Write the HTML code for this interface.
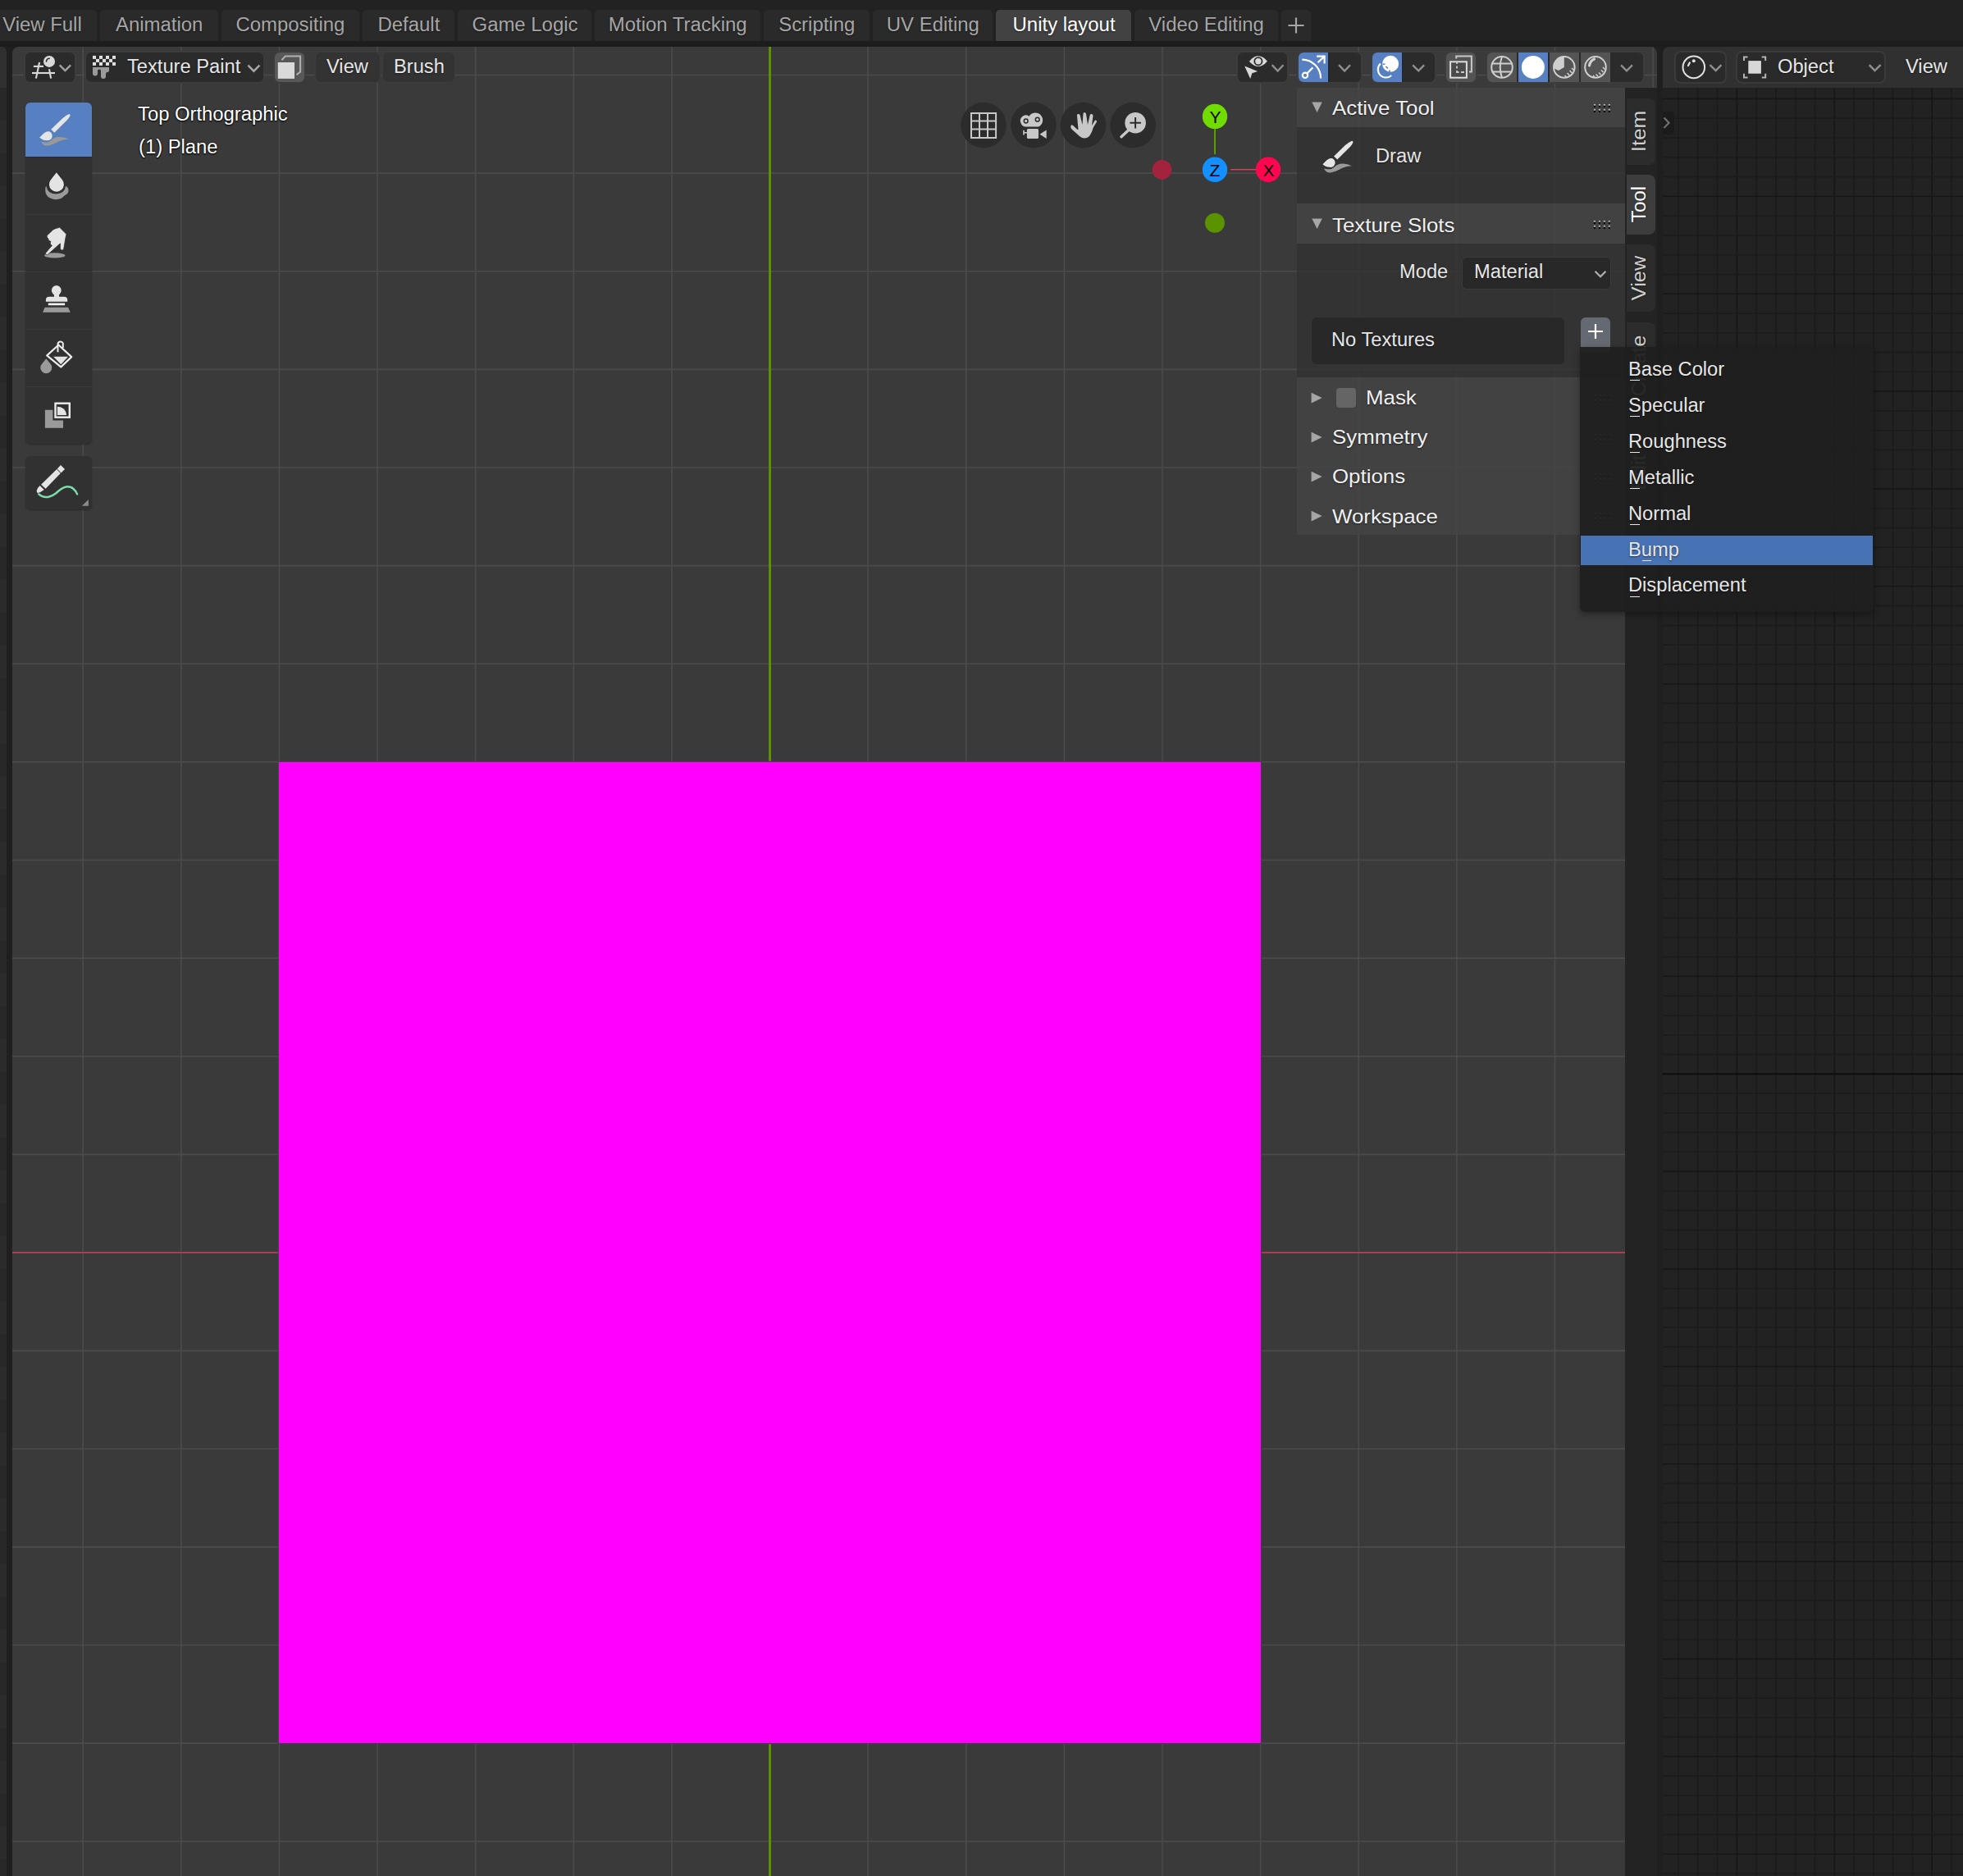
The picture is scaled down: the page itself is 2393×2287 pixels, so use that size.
<!DOCTYPE html>
<html><head><meta charset="utf-8"><title>Blender</title>
<style>
*{margin:0;padding:0;box-sizing:border-box}
html,body{width:2393px;height:2287px;overflow:hidden;background:#1f1f1f}
body{position:relative;font-family:"Liberation Sans",sans-serif}
.a{position:absolute}
.t{position:absolute;white-space:nowrap;transform-origin:0 0}
svg{position:absolute;overflow:visible}
</style></head><body>
<div class="a" style="left:0.00px;top:0.00px;width:2393.00px;height:50.00px;background:#222222;"></div><div class="a" style="left:0.00px;top:50.00px;width:2393.00px;height:7.00px;background:#1d1d1d;"></div><div class="a" style="left:-16.00px;top:12.00px;width:134.00px;height:38.00px;background:#2a2a2a;border-radius:5px 5px 0 0;"></div><div class="a" style="left:122.30px;top:12.00px;width:143.60px;height:38.00px;background:#2a2a2a;border-radius:5px 5px 0 0;"></div><div class="a" style="left:270.00px;top:12.00px;width:167.70px;height:38.00px;background:#2a2a2a;border-radius:5px 5px 0 0;"></div><div class="a" style="left:442.20px;top:12.00px;width:111.60px;height:38.00px;background:#2a2a2a;border-radius:5px 5px 0 0;"></div><div class="a" style="left:558.30px;top:12.00px;width:162.60px;height:38.00px;background:#2a2a2a;border-radius:5px 5px 0 0;"></div><div class="a" style="left:725.40px;top:12.00px;width:201.30px;height:38.00px;background:#2a2a2a;border-radius:5px 5px 0 0;"></div><div class="a" style="left:931.40px;top:12.00px;width:128.40px;height:38.00px;background:#2a2a2a;border-radius:5px 5px 0 0;"></div><div class="a" style="left:1064.30px;top:12.00px;width:145.50px;height:38.00px;background:#2a2a2a;border-radius:5px 5px 0 0;"></div><div class="a" style="left:1214.30px;top:12.00px;width:164.60px;height:38.00px;background:#424242;border-radius:5px 5px 0 0;"></div><div class="a" style="left:1383.40px;top:12.00px;width:174.60px;height:38.00px;background:#2a2a2a;border-radius:5px 5px 0 0;"></div><div class="a" style="left:1562.30px;top:12.00px;width:35.50px;height:38.00px;background:#2a2a2a;border-radius:5px 5px 0 0;"></div><div class="a" style="left:0;top:57px;width:8px;height:2230px;border-top-right-radius:6px;overflow:hidden;background:#282828"><div class="a" style="left:0.00px;top:0.00px;width:8.00px;height:50.00px;background:#303030;"></div><div class="a" style="left:0.00px;top:90.00px;width:8.00px;height:40.00px;background:#2b2b2b;"></div><div class="a" style="left:0.00px;top:170.00px;width:8.00px;height:40.00px;background:#2b2b2b;"></div><div class="a" style="left:0.00px;top:250.00px;width:8.00px;height:40.00px;background:#2b2b2b;"></div><div class="a" style="left:0.00px;top:330.00px;width:8.00px;height:40.00px;background:#2b2b2b;"></div><div class="a" style="left:0.00px;top:410.00px;width:8.00px;height:40.00px;background:#2b2b2b;"></div><div class="a" style="left:0.00px;top:490.00px;width:8.00px;height:40.00px;background:#2b2b2b;"></div><div class="a" style="left:0.00px;top:570.00px;width:8.00px;height:40.00px;background:#2b2b2b;"></div><div class="a" style="left:0.00px;top:650.00px;width:8.00px;height:40.00px;background:#2b2b2b;"></div><div class="a" style="left:0.00px;top:730.00px;width:8.00px;height:40.00px;background:#2b2b2b;"></div><div class="a" style="left:0.00px;top:810.00px;width:8.00px;height:40.00px;background:#2b2b2b;"></div><div class="a" style="left:0.00px;top:890.00px;width:8.00px;height:40.00px;background:#2b2b2b;"></div><div class="a" style="left:0.00px;top:970.00px;width:8.00px;height:40.00px;background:#2b2b2b;"></div><div class="a" style="left:0.00px;top:1050.00px;width:8.00px;height:40.00px;background:#2b2b2b;"></div><div class="a" style="left:0.00px;top:1130.00px;width:8.00px;height:40.00px;background:#2b2b2b;"></div><div class="a" style="left:0.00px;top:1210.00px;width:8.00px;height:40.00px;background:#2b2b2b;"></div><div class="a" style="left:0.00px;top:1290.00px;width:8.00px;height:40.00px;background:#2b2b2b;"></div><div class="a" style="left:0.00px;top:1370.00px;width:8.00px;height:40.00px;background:#2b2b2b;"></div><div class="a" style="left:0.00px;top:1450.00px;width:8.00px;height:40.00px;background:#2b2b2b;"></div><div class="a" style="left:0.00px;top:1530.00px;width:8.00px;height:40.00px;background:#2b2b2b;"></div><div class="a" style="left:0.00px;top:1610.00px;width:8.00px;height:40.00px;background:#2b2b2b;"></div><div class="a" style="left:0.00px;top:1690.00px;width:8.00px;height:40.00px;background:#2b2b2b;"></div><div class="a" style="left:0.00px;top:1770.00px;width:8.00px;height:40.00px;background:#2b2b2b;"></div><div class="a" style="left:0.00px;top:1850.00px;width:8.00px;height:40.00px;background:#2b2b2b;"></div><div class="a" style="left:0.00px;top:1930.00px;width:8.00px;height:40.00px;background:#2b2b2b;"></div><div class="a" style="left:0.00px;top:2010.00px;width:8.00px;height:40.00px;background:#2b2b2b;"></div><div class="a" style="left:0.00px;top:2090.00px;width:8.00px;height:40.00px;background:#2b2b2b;"></div><div class="a" style="left:0.00px;top:2170.00px;width:8.00px;height:40.00px;background:#2b2b2b;"></div><div class="a" style="left:0.00px;top:2250.00px;width:8.00px;height:40.00px;background:#2b2b2b;"></div></div><div class="a" style="left:15px;top:57px;width:2005px;height:2230px;background:#3a3a3a;border-radius:8px 8px 0 0;overflow:hidden"><svg width="2005" height="2230" style="left:0;top:0"><line x1="86.20" y1="0" x2="86.20" y2="2287" stroke="#4b4b4b" stroke-width="1.6"/><line x1="205.82" y1="0" x2="205.82" y2="2287" stroke="#4b4b4b" stroke-width="1.6"/><line x1="325.44" y1="0" x2="325.44" y2="2287" stroke="#4b4b4b" stroke-width="1.6"/><line x1="445.06" y1="0" x2="445.06" y2="2287" stroke="#4b4b4b" stroke-width="1.6"/><line x1="564.68" y1="0" x2="564.68" y2="2287" stroke="#4b4b4b" stroke-width="1.6"/><line x1="684.30" y1="0" x2="684.30" y2="2287" stroke="#4b4b4b" stroke-width="1.6"/><line x1="803.92" y1="0" x2="803.92" y2="2287" stroke="#4b4b4b" stroke-width="1.6"/><line x1="923.54" y1="0" x2="923.54" y2="2287" stroke="#4b4b4b" stroke-width="1.6"/><line x1="1043.16" y1="0" x2="1043.16" y2="2287" stroke="#4b4b4b" stroke-width="1.6"/><line x1="1162.78" y1="0" x2="1162.78" y2="2287" stroke="#4b4b4b" stroke-width="1.6"/><line x1="1282.40" y1="0" x2="1282.40" y2="2287" stroke="#4b4b4b" stroke-width="1.6"/><line x1="1402.02" y1="0" x2="1402.02" y2="2287" stroke="#4b4b4b" stroke-width="1.6"/><line x1="1521.64" y1="0" x2="1521.64" y2="2287" stroke="#4b4b4b" stroke-width="1.6"/><line x1="1641.26" y1="0" x2="1641.26" y2="2287" stroke="#4b4b4b" stroke-width="1.6"/><line x1="1760.88" y1="0" x2="1760.88" y2="2287" stroke="#4b4b4b" stroke-width="1.6"/><line x1="1880.50" y1="0" x2="1880.50" y2="2287" stroke="#4b4b4b" stroke-width="1.6"/><line x1="2000.12" y1="0" x2="2000.12" y2="2287" stroke="#4b4b4b" stroke-width="1.6"/><line x1="0" y1="34.54" x2="2020" y2="34.54" stroke="#4b4b4b" stroke-width="1.6"/><line x1="0" y1="154.16" x2="2020" y2="154.16" stroke="#4b4b4b" stroke-width="1.6"/><line x1="0" y1="273.78" x2="2020" y2="273.78" stroke="#4b4b4b" stroke-width="1.6"/><line x1="0" y1="393.40" x2="2020" y2="393.40" stroke="#4b4b4b" stroke-width="1.6"/><line x1="0" y1="513.02" x2="2020" y2="513.02" stroke="#4b4b4b" stroke-width="1.6"/><line x1="0" y1="632.64" x2="2020" y2="632.64" stroke="#4b4b4b" stroke-width="1.6"/><line x1="0" y1="752.26" x2="2020" y2="752.26" stroke="#4b4b4b" stroke-width="1.6"/><line x1="0" y1="871.88" x2="2020" y2="871.88" stroke="#4b4b4b" stroke-width="1.6"/><line x1="0" y1="991.50" x2="2020" y2="991.50" stroke="#4b4b4b" stroke-width="1.6"/><line x1="0" y1="1111.12" x2="2020" y2="1111.12" stroke="#4b4b4b" stroke-width="1.6"/><line x1="0" y1="1230.74" x2="2020" y2="1230.74" stroke="#4b4b4b" stroke-width="1.6"/><line x1="0" y1="1350.36" x2="2020" y2="1350.36" stroke="#4b4b4b" stroke-width="1.6"/><line x1="0" y1="1469.98" x2="2020" y2="1469.98" stroke="#4b4b4b" stroke-width="1.6"/><line x1="0" y1="1589.60" x2="2020" y2="1589.60" stroke="#4b4b4b" stroke-width="1.6"/><line x1="0" y1="1709.22" x2="2020" y2="1709.22" stroke="#4b4b4b" stroke-width="1.6"/><line x1="0" y1="1828.84" x2="2020" y2="1828.84" stroke="#4b4b4b" stroke-width="1.6"/><line x1="0" y1="1948.46" x2="2020" y2="1948.46" stroke="#4b4b4b" stroke-width="1.6"/><line x1="0" y1="2068.08" x2="2020" y2="2068.08" stroke="#4b4b4b" stroke-width="1.6"/><line x1="0" y1="2187.70" x2="2020" y2="2187.70" stroke="#4b4b4b" stroke-width="1.6"/><line x1="923.54" y1="0" x2="923.54" y2="2287" stroke="#609600" stroke-width="2.8"/><line x1="0" y1="1469.98" x2="2020" y2="1469.98" stroke="#b93755" stroke-width="2.2"/><rect x="324.20" y="871.36" width="1198.45" height="1197.24" fill="none" stroke="#2f4a32" stroke-width="1.2"/><rect x="324.80" y="871.96" width="1197.25" height="1196.04" fill="#ff00ff"/></svg></div><div class="a" style="left:2027.00px;top:57.00px;width:366.00px;height:2230.00px;background:#222222;border-top-left-radius:8px;overflow:hidden;"></div><svg width="366" height="2180" style="left:2027px;top:107px"><line x1="18.93" y1="0" x2="18.93" y2="2287" stroke="#1b1b1b" stroke-width="1.5"/><line x1="42.72" y1="0" x2="42.72" y2="2287" stroke="#1b1b1b" stroke-width="1.5"/><line x1="66.51" y1="0" x2="66.51" y2="2287" stroke="#1b1b1b" stroke-width="1.5"/><line x1="90.30" y1="0" x2="90.30" y2="2287" stroke="#161616" stroke-width="1.5"/><line x1="114.09" y1="0" x2="114.09" y2="2287" stroke="#1b1b1b" stroke-width="1.5"/><line x1="137.88" y1="0" x2="137.88" y2="2287" stroke="#1b1b1b" stroke-width="1.5"/><line x1="161.67" y1="0" x2="161.67" y2="2287" stroke="#1b1b1b" stroke-width="1.5"/><line x1="185.46" y1="0" x2="185.46" y2="2287" stroke="#1b1b1b" stroke-width="1.5"/><line x1="209.25" y1="0" x2="209.25" y2="2287" stroke="#161616" stroke-width="1.5"/><line x1="233.04" y1="0" x2="233.04" y2="2287" stroke="#1b1b1b" stroke-width="1.5"/><line x1="256.83" y1="0" x2="256.83" y2="2287" stroke="#1b1b1b" stroke-width="1.5"/><line x1="280.62" y1="0" x2="280.62" y2="2287" stroke="#1b1b1b" stroke-width="1.5"/><line x1="304.41" y1="0" x2="304.41" y2="2287" stroke="#1b1b1b" stroke-width="1.5"/><line x1="328.20" y1="0" x2="328.20" y2="2287" stroke="#161616" stroke-width="1.5"/><line x1="351.99" y1="0" x2="351.99" y2="2287" stroke="#1b1b1b" stroke-width="1.5"/><line x1="0" y1="13.50" x2="2393" y2="13.50" stroke="#161616" stroke-width="1.5"/><line x1="0" y1="37.27" x2="2393" y2="37.27" stroke="#1b1b1b" stroke-width="1.5"/><line x1="0" y1="61.05" x2="2393" y2="61.05" stroke="#1b1b1b" stroke-width="1.5"/><line x1="0" y1="84.82" x2="2393" y2="84.82" stroke="#1b1b1b" stroke-width="1.5"/><line x1="0" y1="108.60" x2="2393" y2="108.60" stroke="#1b1b1b" stroke-width="1.5"/><line x1="0" y1="132.37" x2="2393" y2="132.37" stroke="#161616" stroke-width="1.5"/><line x1="0" y1="156.14" x2="2393" y2="156.14" stroke="#1b1b1b" stroke-width="1.5"/><line x1="0" y1="179.92" x2="2393" y2="179.92" stroke="#1b1b1b" stroke-width="1.5"/><line x1="0" y1="203.69" x2="2393" y2="203.69" stroke="#1b1b1b" stroke-width="1.5"/><line x1="0" y1="227.47" x2="2393" y2="227.47" stroke="#1b1b1b" stroke-width="1.5"/><line x1="0" y1="251.24" x2="2393" y2="251.24" stroke="#161616" stroke-width="1.5"/><line x1="0" y1="275.01" x2="2393" y2="275.01" stroke="#1b1b1b" stroke-width="1.5"/><line x1="0" y1="298.79" x2="2393" y2="298.79" stroke="#1b1b1b" stroke-width="1.5"/><line x1="0" y1="322.56" x2="2393" y2="322.56" stroke="#1b1b1b" stroke-width="1.5"/><line x1="0" y1="346.34" x2="2393" y2="346.34" stroke="#1b1b1b" stroke-width="1.5"/><line x1="0" y1="370.11" x2="2393" y2="370.11" stroke="#161616" stroke-width="1.5"/><line x1="0" y1="393.88" x2="2393" y2="393.88" stroke="#1b1b1b" stroke-width="1.5"/><line x1="0" y1="417.66" x2="2393" y2="417.66" stroke="#1b1b1b" stroke-width="1.5"/><line x1="0" y1="441.43" x2="2393" y2="441.43" stroke="#1b1b1b" stroke-width="1.5"/><line x1="0" y1="465.21" x2="2393" y2="465.21" stroke="#1b1b1b" stroke-width="1.5"/><line x1="0" y1="488.98" x2="2393" y2="488.98" stroke="#161616" stroke-width="1.5"/><line x1="0" y1="512.75" x2="2393" y2="512.75" stroke="#1b1b1b" stroke-width="1.5"/><line x1="0" y1="536.53" x2="2393" y2="536.53" stroke="#1b1b1b" stroke-width="1.5"/><line x1="0" y1="560.30" x2="2393" y2="560.30" stroke="#1b1b1b" stroke-width="1.5"/><line x1="0" y1="584.08" x2="2393" y2="584.08" stroke="#1b1b1b" stroke-width="1.5"/><line x1="0" y1="607.85" x2="2393" y2="607.85" stroke="#161616" stroke-width="1.5"/><line x1="0" y1="631.62" x2="2393" y2="631.62" stroke="#1b1b1b" stroke-width="1.5"/><line x1="0" y1="655.40" x2="2393" y2="655.40" stroke="#1b1b1b" stroke-width="1.5"/><line x1="0" y1="679.17" x2="2393" y2="679.17" stroke="#1b1b1b" stroke-width="1.5"/><line x1="0" y1="702.95" x2="2393" y2="702.95" stroke="#1b1b1b" stroke-width="1.5"/><line x1="0" y1="726.72" x2="2393" y2="726.72" stroke="#161616" stroke-width="1.5"/><line x1="0" y1="750.49" x2="2393" y2="750.49" stroke="#1b1b1b" stroke-width="1.5"/><line x1="0" y1="774.27" x2="2393" y2="774.27" stroke="#1b1b1b" stroke-width="1.5"/><line x1="0" y1="798.04" x2="2393" y2="798.04" stroke="#1b1b1b" stroke-width="1.5"/><line x1="0" y1="821.82" x2="2393" y2="821.82" stroke="#1b1b1b" stroke-width="1.5"/><line x1="0" y1="845.59" x2="2393" y2="845.59" stroke="#161616" stroke-width="1.5"/><line x1="0" y1="869.36" x2="2393" y2="869.36" stroke="#1b1b1b" stroke-width="1.5"/><line x1="0" y1="893.14" x2="2393" y2="893.14" stroke="#1b1b1b" stroke-width="1.5"/><line x1="0" y1="916.91" x2="2393" y2="916.91" stroke="#1b1b1b" stroke-width="1.5"/><line x1="0" y1="940.69" x2="2393" y2="940.69" stroke="#1b1b1b" stroke-width="1.5"/><line x1="0" y1="964.46" x2="2393" y2="964.46" stroke="#161616" stroke-width="1.5"/><line x1="0" y1="988.23" x2="2393" y2="988.23" stroke="#1b1b1b" stroke-width="1.5"/><line x1="0" y1="1012.01" x2="2393" y2="1012.01" stroke="#1b1b1b" stroke-width="1.5"/><line x1="0" y1="1035.78" x2="2393" y2="1035.78" stroke="#1b1b1b" stroke-width="1.5"/><line x1="0" y1="1059.56" x2="2393" y2="1059.56" stroke="#1b1b1b" stroke-width="1.5"/><line x1="0" y1="1083.33" x2="2393" y2="1083.33" stroke="#161616" stroke-width="1.5"/><line x1="0" y1="1107.10" x2="2393" y2="1107.10" stroke="#1b1b1b" stroke-width="1.5"/><line x1="0" y1="1130.88" x2="2393" y2="1130.88" stroke="#1b1b1b" stroke-width="1.5"/><line x1="0" y1="1154.65" x2="2393" y2="1154.65" stroke="#1b1b1b" stroke-width="1.5"/><line x1="0" y1="1178.43" x2="2393" y2="1178.43" stroke="#1b1b1b" stroke-width="1.5"/><line x1="0" y1="1202.20" x2="2393" y2="1202.20" stroke="#0e0e0e" stroke-width="2"/><line x1="0" y1="1225.97" x2="2393" y2="1225.97" stroke="#1b1b1b" stroke-width="1.5"/><line x1="0" y1="1249.75" x2="2393" y2="1249.75" stroke="#1b1b1b" stroke-width="1.5"/><line x1="0" y1="1273.52" x2="2393" y2="1273.52" stroke="#1b1b1b" stroke-width="1.5"/><line x1="0" y1="1297.30" x2="2393" y2="1297.30" stroke="#1b1b1b" stroke-width="1.5"/><line x1="0" y1="1321.07" x2="2393" y2="1321.07" stroke="#161616" stroke-width="1.5"/><line x1="0" y1="1344.84" x2="2393" y2="1344.84" stroke="#1b1b1b" stroke-width="1.5"/><line x1="0" y1="1368.62" x2="2393" y2="1368.62" stroke="#1b1b1b" stroke-width="1.5"/><line x1="0" y1="1392.39" x2="2393" y2="1392.39" stroke="#1b1b1b" stroke-width="1.5"/><line x1="0" y1="1416.17" x2="2393" y2="1416.17" stroke="#1b1b1b" stroke-width="1.5"/><line x1="0" y1="1439.94" x2="2393" y2="1439.94" stroke="#161616" stroke-width="1.5"/><line x1="0" y1="1463.71" x2="2393" y2="1463.71" stroke="#1b1b1b" stroke-width="1.5"/><line x1="0" y1="1487.49" x2="2393" y2="1487.49" stroke="#1b1b1b" stroke-width="1.5"/><line x1="0" y1="1511.26" x2="2393" y2="1511.26" stroke="#1b1b1b" stroke-width="1.5"/><line x1="0" y1="1535.04" x2="2393" y2="1535.04" stroke="#1b1b1b" stroke-width="1.5"/><line x1="0" y1="1558.81" x2="2393" y2="1558.81" stroke="#161616" stroke-width="1.5"/><line x1="0" y1="1582.58" x2="2393" y2="1582.58" stroke="#1b1b1b" stroke-width="1.5"/><line x1="0" y1="1606.36" x2="2393" y2="1606.36" stroke="#1b1b1b" stroke-width="1.5"/><line x1="0" y1="1630.13" x2="2393" y2="1630.13" stroke="#1b1b1b" stroke-width="1.5"/><line x1="0" y1="1653.91" x2="2393" y2="1653.91" stroke="#1b1b1b" stroke-width="1.5"/><line x1="0" y1="1677.68" x2="2393" y2="1677.68" stroke="#161616" stroke-width="1.5"/><line x1="0" y1="1701.45" x2="2393" y2="1701.45" stroke="#1b1b1b" stroke-width="1.5"/><line x1="0" y1="1725.23" x2="2393" y2="1725.23" stroke="#1b1b1b" stroke-width="1.5"/><line x1="0" y1="1749.00" x2="2393" y2="1749.00" stroke="#1b1b1b" stroke-width="1.5"/><line x1="0" y1="1772.78" x2="2393" y2="1772.78" stroke="#1b1b1b" stroke-width="1.5"/><line x1="0" y1="1796.55" x2="2393" y2="1796.55" stroke="#161616" stroke-width="1.5"/><line x1="0" y1="1820.32" x2="2393" y2="1820.32" stroke="#1b1b1b" stroke-width="1.5"/><line x1="0" y1="1844.10" x2="2393" y2="1844.10" stroke="#1b1b1b" stroke-width="1.5"/><line x1="0" y1="1867.87" x2="2393" y2="1867.87" stroke="#1b1b1b" stroke-width="1.5"/><line x1="0" y1="1891.65" x2="2393" y2="1891.65" stroke="#1b1b1b" stroke-width="1.5"/><line x1="0" y1="1915.42" x2="2393" y2="1915.42" stroke="#161616" stroke-width="1.5"/><line x1="0" y1="1939.19" x2="2393" y2="1939.19" stroke="#1b1b1b" stroke-width="1.5"/><line x1="0" y1="1962.97" x2="2393" y2="1962.97" stroke="#1b1b1b" stroke-width="1.5"/><line x1="0" y1="1986.74" x2="2393" y2="1986.74" stroke="#1b1b1b" stroke-width="1.5"/><line x1="0" y1="2010.52" x2="2393" y2="2010.52" stroke="#1b1b1b" stroke-width="1.5"/><line x1="0" y1="2034.29" x2="2393" y2="2034.29" stroke="#161616" stroke-width="1.5"/><line x1="0" y1="2058.06" x2="2393" y2="2058.06" stroke="#1b1b1b" stroke-width="1.5"/><line x1="0" y1="2081.84" x2="2393" y2="2081.84" stroke="#1b1b1b" stroke-width="1.5"/><line x1="0" y1="2105.61" x2="2393" y2="2105.61" stroke="#1b1b1b" stroke-width="1.5"/><line x1="0" y1="2129.39" x2="2393" y2="2129.39" stroke="#1b1b1b" stroke-width="1.5"/><line x1="0" y1="2153.16" x2="2393" y2="2153.16" stroke="#161616" stroke-width="1.5"/><line x1="0" y1="2176.93" x2="2393" y2="2176.93" stroke="#1b1b1b" stroke-width="1.5"/></svg><div class="a" style="left:2027.00px;top:57.00px;width:366.00px;height:50.00px;background:#303030;border-top-left-radius:8px;"></div><div class="a" style="left:1981.00px;top:107.00px;width:39.00px;height:2180.00px;background:#232323;"></div><div class="a" style="left:1581.00px;top:107.00px;width:400.00px;height:48.00px;background:rgba(68,68,68,.85);"></div><div class="a" style="left:1581.00px;top:155.00px;width:400.00px;height:93.00px;background:rgba(50,50,50,.85);"></div><div class="a" style="left:1581.00px;top:248.00px;width:400.00px;height:49.00px;background:rgba(68,68,68,.85);"></div><div class="a" style="left:1581.00px;top:297.00px;width:400.00px;height:163.00px;background:rgba(50,50,50,.85);"></div><div class="a" style="left:1581.00px;top:460.00px;width:400.00px;height:192.00px;background:rgba(68,68,68,.85);"></div><div class="t" style="left:-16px;top:19.33px;width:134px;text-align:center;font-size:23px;line-height:23px;color:#a6a6a6;text-shadow:0 1px 2px rgba(0,0,0,.5)"><span style="display:inline-block;transform:scaleX(1.04)">View Full</span></div><div class="t" style="left:122.3px;top:19.33px;width:143.59999999999997px;text-align:center;font-size:23px;line-height:23px;color:#a6a6a6;text-shadow:0 1px 2px rgba(0,0,0,.5)"><span style="display:inline-block;transform:scaleX(1.04)">Animation</span></div><div class="t" style="left:270px;top:19.33px;width:167.7px;text-align:center;font-size:23px;line-height:23px;color:#a6a6a6;text-shadow:0 1px 2px rgba(0,0,0,.5)"><span style="display:inline-block;transform:scaleX(1.04)">Compositing</span></div><div class="t" style="left:442.2px;top:19.33px;width:111.59999999999997px;text-align:center;font-size:23px;line-height:23px;color:#a6a6a6;text-shadow:0 1px 2px rgba(0,0,0,.5)"><span style="display:inline-block;transform:scaleX(1.04)">Default</span></div><div class="t" style="left:558.3px;top:19.33px;width:162.60000000000002px;text-align:center;font-size:23px;line-height:23px;color:#a6a6a6;text-shadow:0 1px 2px rgba(0,0,0,.5)"><span style="display:inline-block;transform:scaleX(1.04)">Game Logic</span></div><div class="t" style="left:725.4px;top:19.33px;width:201.30000000000007px;text-align:center;font-size:23px;line-height:23px;color:#a6a6a6;text-shadow:0 1px 2px rgba(0,0,0,.5)"><span style="display:inline-block;transform:scaleX(1.04)">Motion Tracking</span></div><div class="t" style="left:931.4px;top:19.33px;width:128.39999999999998px;text-align:center;font-size:23px;line-height:23px;color:#a6a6a6;text-shadow:0 1px 2px rgba(0,0,0,.5)"><span style="display:inline-block;transform:scaleX(1.04)">Scripting</span></div><div class="t" style="left:1064.3px;top:19.33px;width:145.5px;text-align:center;font-size:23px;line-height:23px;color:#a6a6a6;text-shadow:0 1px 2px rgba(0,0,0,.5)"><span style="display:inline-block;transform:scaleX(1.04)">UV Editing</span></div><div class="t" style="left:1214.3px;top:19.33px;width:164.60000000000014px;text-align:center;font-size:23px;line-height:23px;color:#ffffff;text-shadow:0 1px 2px rgba(0,0,0,.5)"><span style="display:inline-block;transform:scaleX(1.04)">Unity layout</span></div><div class="t" style="left:1383.4px;top:19.33px;width:174.5999999999999px;text-align:center;font-size:23px;line-height:23px;color:#a6a6a6;text-shadow:0 1px 2px rgba(0,0,0,.5)"><span style="display:inline-block;transform:scaleX(1.04)">Video Editing</span></div><svg width="36" height="38" style="left:1562px;top:12px"><path d="M18 9.5v19M8.5 19h19" stroke="#a6a6a6" stroke-width="2.2"/></svg><div class="a" style="left:29.00px;top:62.40px;width:63.80px;height:39.40px;background:#3c3c3c;border-radius:8px;"></div><div class="a" style="left:30.60px;top:64.20px;width:60.60px;height:35.60px;background:#2b2b2b;border-radius:6px;"></div><div class="a" style="left:103.10px;top:62.40px;width:219.10px;height:39.40px;background:#3c3c3c;border-radius:8px;"></div><div class="a" style="left:104.70px;top:64.20px;width:215.90px;height:35.60px;background:#2b2b2b;border-radius:6px;"></div><div class="a" style="left:333.40px;top:62.40px;width:38.80px;height:39.40px;background:#3c3c3c;border-radius:8px;"></div><div class="a" style="left:335.00px;top:64.20px;width:35.60px;height:35.60px;background:#585858;border-radius:6px;"></div><div class="a" style="left:383.40px;top:62.40px;width:80.70px;height:39.40px;background:#3c3c3c;border-radius:8px;"></div><div class="a" style="left:385.00px;top:64.20px;width:77.50px;height:35.60px;background:rgba(44,44,44,.55);border-radius:6px;"></div><div class="a" style="left:465.40px;top:62.40px;width:89.90px;height:39.40px;background:#3c3c3c;border-radius:8px;"></div><div class="a" style="left:467.00px;top:64.20px;width:86.70px;height:35.60px;background:rgba(44,44,44,.55);border-radius:6px;"></div><div class="a" style="left:1507.40px;top:62.40px;width:63.20px;height:39.40px;background:#3c3c3c;border-radius:8px;"></div><div class="a" style="left:1509.00px;top:64.20px;width:60.00px;height:35.60px;background:#2b2b2b;border-radius:6px;"></div><div class="a" style="left:1581.40px;top:62.40px;width:79.20px;height:39.40px;background:#3c3c3c;border-radius:8px;"></div><div class="a" style="left:1583.00px;top:64.20px;width:76.00px;height:35.60px;background:#2b2b2b;border-radius:6px;"></div><div class="a" style="left:1583.00px;top:64.20px;width:36.20px;height:35.60px;background:#5680c2;border-radius:6px 0 0 6px;"></div><div class="a" style="left:1619.20px;top:64.20px;width:1.40px;height:35.60px;background:#262626;"></div><div class="a" style="left:1671.40px;top:62.40px;width:79.20px;height:39.40px;background:#3c3c3c;border-radius:8px;"></div><div class="a" style="left:1673.00px;top:64.20px;width:76.00px;height:35.60px;background:#2b2b2b;border-radius:6px;"></div><div class="a" style="left:1673.00px;top:64.20px;width:36.00px;height:35.60px;background:#5680c2;border-radius:6px 0 0 6px;"></div><div class="a" style="left:1709.00px;top:64.20px;width:1.40px;height:35.60px;background:#262626;"></div><div class="a" style="left:1761.40px;top:62.40px;width:39.20px;height:39.40px;background:#3c3c3c;border-radius:8px;"></div><div class="a" style="left:1763.00px;top:64.20px;width:36.00px;height:35.60px;background:#545454;border-radius:6px;"></div><div class="a" style="left:1811.40px;top:62.40px;width:193.20px;height:39.40px;background:#3c3c3c;border-radius:8px;"></div><div class="a" style="left:1813.00px;top:64.20px;width:190.00px;height:35.60px;background:#2b2b2b;border-radius:6px;"></div><div class="a" style="left:1813.00px;top:64.20px;width:36.00px;height:35.60px;background:#545454;border-radius:6px 0 0 6px;"></div><div class="a" style="left:1849.00px;top:64.20px;width:38.00px;height:35.60px;background:#5680c2;"></div><div class="a" style="left:1887.00px;top:64.20px;width:38.00px;height:35.60px;background:#545454;"></div><div class="a" style="left:1925.00px;top:64.20px;width:38.00px;height:35.60px;background:#545454;"></div><div class="a" style="left:1848.80px;top:64.20px;width:2.00px;height:35.60px;background:#2a2a2a;"></div><div class="a" style="left:1887.00px;top:64.20px;width:2.00px;height:35.60px;background:#2a2a2a;"></div><div class="a" style="left:1925.00px;top:64.20px;width:2.00px;height:35.60px;background:#2a2a2a;"></div><div class="a" style="left:1963.00px;top:64.20px;width:2.00px;height:35.60px;background:#2a2a2a;"></div><div class="t" style="left:398.00px;top:69.53px;font-size:23px;line-height:23px;color:#e6e6e6;transform:scaleX(1.03);text-shadow:0 1px 2px rgba(0,0,0,.55);">View</div><div class="t" style="left:480.00px;top:69.53px;font-size:23px;line-height:23px;color:#e6e6e6;transform:scaleX(1.03);text-shadow:0 1px 2px rgba(0,0,0,.55);">Brush</div><div class="t" style="left:155.00px;top:69.53px;font-size:23px;line-height:23px;color:#e6e6e6;transform:scaleX(1.03);text-shadow:0 1px 2px rgba(0,0,0,.55);">Texture Paint</div><div class="a" style="left:30.70px;top:124.90px;width:81.30px;height:416.10px;background:#313131;border-radius:6px;box-shadow:0 1px 2px rgba(0,0,0,.3);"></div><div class="a" style="left:30.70px;top:261.15px;width:81.30px;height:1.30px;background:#393939;"></div><div class="a" style="left:30.70px;top:331.15px;width:81.30px;height:1.30px;background:#393939;"></div><div class="a" style="left:30.70px;top:401.15px;width:81.30px;height:1.30px;background:#393939;"></div><div class="a" style="left:30.70px;top:471.15px;width:81.30px;height:1.30px;background:#393939;"></div><div class="a" style="left:30.70px;top:191.00px;width:81.30px;height:1.20px;background:#282828;"></div><div class="a" style="left:30.90px;top:124.90px;width:81.20px;height:66.10px;background:#5680c2;border-radius:6px 6px 0 0;"></div><div class="a" style="left:30.70px;top:555.50px;width:81.30px;height:65.70px;background:#313131;border-radius:6px;box-shadow:0 1px 2px rgba(0,0,0,.3);"></div><div class="t" style="left:168.00px;top:128.03px;font-size:23px;line-height:23px;color:#ffffff;transform:scaleX(1.035);text-shadow:0 1px 2px rgba(0,0,0,.55);text-shadow:0 0 2px #000,0 1px 2px #000;">Top Orthographic</div><div class="t" style="left:168.50px;top:167.83px;font-size:23px;line-height:23px;color:#ffffff;transform:scaleX(1.035);text-shadow:0 1px 2px rgba(0,0,0,.55);text-shadow:0 0 2px #000,0 1px 2px #000;">(1) Plane</div><svg width="1" height="1" style="left:0;top:0"><circle cx="1199" cy="152.6" r="27.8" fill="#2c2c2c"/></svg><svg width="1" height="1" style="left:0;top:0"><circle cx="1260" cy="152.6" r="27.8" fill="#2c2c2c"/></svg><svg width="1" height="1" style="left:0;top:0"><circle cx="1320.5" cy="152.6" r="27.8" fill="#2c2c2c"/></svg><svg width="1" height="1" style="left:0;top:0"><circle cx="1381.2" cy="152.6" r="27.8" fill="#2c2c2c"/></svg><svg width="1" height="1" style="left:0;top:0"><line x1="1481" y1="157" x2="1481" y2="188" stroke="#6db000" stroke-width="1.6"/><line x1="1500" y1="206.7" x2="1531" y2="206.7" stroke="#e83a5a" stroke-width="1.4"/><circle cx="1416.5" cy="206.9" r="11.8" fill="#a3233f"/><circle cx="1481" cy="271.8" r="12" fill="#5a9200"/><circle cx="1481" cy="141.9" r="15.2" fill="#70dc00"/><circle cx="1481" cy="206.7" r="15.2" fill="#138fff"/><circle cx="1546" cy="206.7" r="15.2" fill="#ff0650"/></svg><div class="t" style="left:1474.50px;top:132.12px;font-size:21px;line-height:21px;color:#000;transform:scaleX(1.0);">Y</div><div class="t" style="left:1474.50px;top:196.92px;font-size:21px;line-height:21px;color:#000;transform:scaleX(1.0);">Z</div><div class="t" style="left:1539.50px;top:196.92px;font-size:21px;line-height:21px;color:#000;transform:scaleX(1.0);">X</div><svg width="1" height="1" style="left:0;top:0"><path d="M1599.3 124.6 L1611.8 124.6 L1605.55 137.1Z" fill="#a6a6a6"/></svg><div class="t" style="left:1624.00px;top:119.56px;font-size:24.5px;line-height:24.5px;color:#f0f0f0;transform:scaleX(1.055);text-shadow:0 1px 2px rgba(0,0,0,.55);">Active Tool</div><svg width="1" height="1" style="left:0;top:0"><rect x="1942.90" y="126.9" width="2.1" height="1.9" fill="#bcbcbc"/><rect x="1942.90" y="128.8" width="2.1" height="2.1" fill="#000"/><rect x="1942.90" y="132.9" width="2.1" height="1.9" fill="#bcbcbc"/><rect x="1942.90" y="134.8" width="2.1" height="2.1" fill="#000"/><rect x="1948.85" y="126.9" width="2.1" height="1.9" fill="#bcbcbc"/><rect x="1948.85" y="128.8" width="2.1" height="2.1" fill="#000"/><rect x="1948.85" y="132.9" width="2.1" height="1.9" fill="#bcbcbc"/><rect x="1948.85" y="134.8" width="2.1" height="2.1" fill="#000"/><rect x="1954.80" y="126.9" width="2.1" height="1.9" fill="#bcbcbc"/><rect x="1954.80" y="128.8" width="2.1" height="2.1" fill="#000"/><rect x="1954.80" y="132.9" width="2.1" height="1.9" fill="#bcbcbc"/><rect x="1954.80" y="134.8" width="2.1" height="2.1" fill="#000"/><rect x="1960.75" y="126.9" width="2.1" height="1.9" fill="#bcbcbc"/><rect x="1960.75" y="128.8" width="2.1" height="2.1" fill="#000"/><rect x="1960.75" y="132.9" width="2.1" height="1.9" fill="#bcbcbc"/><rect x="1960.75" y="134.8" width="2.1" height="2.1" fill="#000"/></svg><div class="t" style="left:1676.50px;top:178.93px;font-size:23px;line-height:23px;color:#e6e6e6;transform:scaleX(1.03);text-shadow:0 1px 2px rgba(0,0,0,.55);">Draw</div><svg width="1" height="1" style="left:0;top:0"><path d="M1599.3 266.6 L1611.8 266.6 L1605.55 279.1Z" fill="#a6a6a6"/></svg><div class="t" style="left:1624.00px;top:262.56px;font-size:24.5px;line-height:24.5px;color:#f0f0f0;transform:scaleX(1.055);text-shadow:0 1px 2px rgba(0,0,0,.55);">Texture Slots</div><svg width="1" height="1" style="left:0;top:0"><rect x="1942.90" y="268.9" width="2.1" height="1.9" fill="#bcbcbc"/><rect x="1942.90" y="270.79999999999995" width="2.1" height="2.1" fill="#000"/><rect x="1942.90" y="274.9" width="2.1" height="1.9" fill="#bcbcbc"/><rect x="1942.90" y="276.79999999999995" width="2.1" height="2.1" fill="#000"/><rect x="1948.85" y="268.9" width="2.1" height="1.9" fill="#bcbcbc"/><rect x="1948.85" y="270.79999999999995" width="2.1" height="2.1" fill="#000"/><rect x="1948.85" y="274.9" width="2.1" height="1.9" fill="#bcbcbc"/><rect x="1948.85" y="276.79999999999995" width="2.1" height="2.1" fill="#000"/><rect x="1954.80" y="268.9" width="2.1" height="1.9" fill="#bcbcbc"/><rect x="1954.80" y="270.79999999999995" width="2.1" height="2.1" fill="#000"/><rect x="1954.80" y="274.9" width="2.1" height="1.9" fill="#bcbcbc"/><rect x="1954.80" y="276.79999999999995" width="2.1" height="2.1" fill="#000"/><rect x="1960.75" y="268.9" width="2.1" height="1.9" fill="#bcbcbc"/><rect x="1960.75" y="270.79999999999995" width="2.1" height="2.1" fill="#000"/><rect x="1960.75" y="274.9" width="2.1" height="1.9" fill="#bcbcbc"/><rect x="1960.75" y="276.79999999999995" width="2.1" height="2.1" fill="#000"/></svg><div class="t" style="left:1706.00px;top:320.23px;font-size:23px;line-height:23px;color:#e6e6e6;transform:scaleX(1.03);text-shadow:0 1px 2px rgba(0,0,0,.55);">Mode</div><div class="a" style="left:1781.60px;top:313.40px;width:182.80px;height:39.40px;background:#282828;border-radius:6px;border:1px solid #3a3a3a;"></div><div class="t" style="left:1797.00px;top:320.23px;font-size:23px;line-height:23px;color:#e6e6e6;transform:scaleX(1.03);text-shadow:0 1px 2px rgba(0,0,0,.55);">Material</div><svg width="1" height="1" style="left:0;top:0"><path d="M1944.5 330.75 L1951 337.25 L1957.5 330.75" fill="none" stroke="#b0b0b0" stroke-width="2.2"/></svg><div class="a" style="left:1597.70px;top:385.60px;width:310.50px;height:59.10px;background:#282828;border-radius:7px;border:1px solid #353535;"></div><div class="t" style="left:1622.50px;top:402.93px;font-size:23px;line-height:23px;color:#e6e6e6;transform:scaleX(1.03);text-shadow:0 1px 2px rgba(0,0,0,.55);">No Textures</div><div class="a" style="left:1926.90px;top:386.80px;width:36.10px;height:43.20px;background:#656a72;border-radius:6px 6px 0 0;"></div><svg width="1" height="1" style="left:0;top:0"><path d="M1945 395v18M1936 404h18" stroke="#fff" stroke-width="2.2"/></svg><svg width="1" height="1" style="left:0;top:0"><path d="M1598.6 478.7 L1611.6 485.09999999999997 L1598.6 491.5Z" fill="#a6a6a6"/></svg><div class="a" style="left:1628.60px;top:473.30px;width:24.60px;height:24.10px;background:#656565;border-radius:4px;"></div><div class="t" style="left:1665.00px;top:473.16px;font-size:24.5px;line-height:24.5px;color:#f0f0f0;transform:scaleX(1.055);text-shadow:0 1px 2px rgba(0,0,0,.55);">Mask</div><svg width="1" height="1" style="left:0;top:0"><path d="M1598.6 526.7 L1611.6 533.1 L1598.6 539.5Z" fill="#a6a6a6"/></svg><div class="t" style="left:1624.00px;top:521.46px;font-size:24.5px;line-height:24.5px;color:#f0f0f0;transform:scaleX(1.055);text-shadow:0 1px 2px rgba(0,0,0,.55);">Symmetry</div><svg width="1" height="1" style="left:0;top:0"><path d="M1598.6 574.7 L1611.6 581.1 L1598.6 587.5Z" fill="#a6a6a6"/></svg><div class="t" style="left:1624.00px;top:569.46px;font-size:24.5px;line-height:24.5px;color:#f0f0f0;transform:scaleX(1.055);text-shadow:0 1px 2px rgba(0,0,0,.55);">Options</div><svg width="1" height="1" style="left:0;top:0"><path d="M1598.6 622.7 L1611.6 629.1 L1598.6 635.5Z" fill="#a6a6a6"/></svg><div class="t" style="left:1624.00px;top:617.56px;font-size:24.5px;line-height:24.5px;color:#f0f0f0;transform:scaleX(1.055);text-shadow:0 1px 2px rgba(0,0,0,.55);">Workspace</div><div class="a" style="left:1983.00px;top:119.50px;width:35.30px;height:81.10px;background:#2c2c2c;border-radius:0 8px 8px 0;"></div><div class="t" style="left:1998px;top:160.05px;font-size:23px;line-height:23px;color:#cfcfcf;transform:translate(-50%,-50%) rotate(-90deg);transform-origin:50% 50%;text-shadow:0 1px 2px rgba(0,0,0,.5)"><span style="display:inline-block;transform:scaleX(1.13)">Item</span></div><div class="a" style="left:1983.00px;top:212.50px;width:35.30px;height:73.30px;background:#3d3d3d;border-radius:0 8px 8px 0;"></div><div class="t" style="left:1998px;top:249.15px;font-size:23px;line-height:23px;color:#ffffff;transform:translate(-50%,-50%) rotate(-90deg);transform-origin:50% 50%;text-shadow:0 1px 2px rgba(0,0,0,.5)"><span style="display:inline-block;transform:scaleX(1.05)">Tool</span></div><div class="a" style="left:1983.00px;top:297.50px;width:35.30px;height:82.70px;background:#2c2c2c;border-radius:0 8px 8px 0;"></div><div class="t" style="left:1998px;top:338.85px;font-size:23px;line-height:23px;color:#cfcfcf;transform:translate(-50%,-50%) rotate(-90deg);transform-origin:50% 50%;text-shadow:0 1px 2px rgba(0,0,0,.5)"><span style="display:inline-block;transform:scaleX(1.1)">View</span></div><div class="a" style="left:1983.00px;top:392.50px;width:35.30px;height:106.50px;background:#2c2c2c;border-radius:0 8px 8px 0;"></div><div class="t" style="left:1998px;top:445.75px;font-size:23px;line-height:23px;color:#cfcfcf;transform:translate(-50%,-50%) rotate(-90deg);transform-origin:50% 50%;text-shadow:0 1px 2px rgba(0,0,0,.5)"><span style="display:inline-block;transform:scaleX(1.08)">Create</span></div><div class="a" style="left:1983.00px;top:509.50px;width:35.30px;height:133.50px;background:#2c2c2c;border-radius:0 8px 8px 0;"></div><div class="t" style="left:1998px;top:576.25px;font-size:23px;line-height:23px;color:#cfcfcf;transform:translate(-50%,-50%) rotate(-90deg);transform-origin:50% 50%;text-shadow:0 1px 2px rgba(0,0,0,.5)"><span style="display:inline-block;transform:scaleX(1.08)">Edit</span></div><div class="a" style="left:2027.00px;top:135.90px;width:13.90px;height:27.70px;background:#1b1b1b;border-radius:0 5px 5px 0;"></div><svg width="1" height="1" style="left:0;top:0"><path d="M2028.5 143.5 L2034.5 149.7 L2028.5 156" fill="none" stroke="#6f6f6f" stroke-width="2.2"/></svg><div class="a" style="left:2041.40px;top:62.40px;width:63.20px;height:39.40px;background:#3a3a3a;border-radius:8px;"></div><div class="a" style="left:2043.00px;top:64.20px;width:60.00px;height:35.60px;background:#2a2a2a;border-radius:6px;"></div><div class="a" style="left:2115.90px;top:62.40px;width:182.70px;height:39.40px;background:#3a3a3a;border-radius:8px;"></div><div class="a" style="left:2117.50px;top:64.20px;width:179.50px;height:35.60px;background:#2a2a2a;border-radius:6px;"></div><div class="t" style="left:2167.00px;top:70.03px;font-size:23px;line-height:23px;color:#e6e6e6;transform:scaleX(1.03);text-shadow:0 1px 2px rgba(0,0,0,.55);">Object</div><div class="t" style="left:2323.00px;top:70.03px;font-size:23px;line-height:23px;color:#e6e6e6;transform:scaleX(1.03);text-shadow:0 1px 2px rgba(0,0,0,.55);">View</div><svg width="1" height="1" style="left:0;top:0"><g stroke="#d9d9d9" stroke-width="2.1" fill="none" stroke-linecap="butt"><line x1="40.9" y1="80.9" x2="53" y2="80.9"/><line x1="39" y1="89" x2="67" y2="89"/><line x1="48.1" y1="76" x2="43.9" y2="95.6"/><line x1="60" y1="84.3" x2="62.1" y2="95.6"/></g><circle cx="60" cy="74.9" r="7" fill="#d9d9d9"/><path d="M56.5 75 A3.8 3.8 0 0 1 60.2 71.2" stroke="#2b2b2b" stroke-width="1.6" fill="none" stroke-linecap="round"/><path d="M72.7 79.4 L79.4 86.1 L86.1 79.4" stroke="#a0a0a0" stroke-width="2.4" fill="none"/></svg><svg width="1" height="1" style="left:0;top:0"><rect x="113.0" y="67.9" width="4" height="4" fill="#e0e0e0"/><rect x="121.0" y="67.9" width="4" height="4" fill="#e0e0e0"/><rect x="129.0" y="67.9" width="4" height="4" fill="#e0e0e0"/><rect x="137.0" y="67.9" width="4" height="4" fill="#e0e0e0"/><rect x="117.0" y="71.9" width="4" height="4" fill="#e0e0e0"/><rect x="125.0" y="71.9" width="4" height="4" fill="#e0e0e0"/><rect x="133.0" y="71.9" width="4" height="4" fill="#e0e0e0"/><rect x="113.0" y="75.9" width="4" height="4" fill="#e0e0e0"/><rect x="121.0" y="75.9" width="4" height="4" fill="#e0e0e0"/><rect x="129.0" y="75.9" width="4" height="4" fill="#e0e0e0"/><rect x="137.0" y="75.9" width="4" height="4" fill="#e0e0e0"/><path d="M113 82 H133 V86 Q133 88 131 88 Q129 88 129 90 V93 A3 3 0 0 1 123 93 V86.5 A2 2 0 0 0 119 86.5 V89.5 A3 3 0 0 1 113 89.5 Z" fill="#9a9a9a"/><path d="M302.4 79.6 L309.4 86.7 L316.4 79.6" stroke="#a8a8a8" stroke-width="2.4" fill="none"/></svg><svg width="1" height="1" style="left:0;top:0"><rect x="338.8" y="76" width="20.2" height="19.9" fill="#dadada"/><path d="M343.4 73.2 L347.8 68.6 H366.1 V87.5 L361.5 91.3" stroke="#b0b0b0" stroke-width="2" fill="none"/></svg><svg width="1" height="1" style="left:0;top:0"><path d="M1522.9 74.7 Q1533.9 62 1544.9 74.7 Q1533.9 87.4 1522.9 74.7 Z" fill="#d9d9d9"/><circle cx="1533.9" cy="74.7" r="4.6" fill="none" stroke="#2c2c2c" stroke-width="1.8"/><path d="M1517.2 80.4 L1533.1 86.9 L1526.3 89.2 L1524.2 95.9 Z" fill="#d9d9d9"/><path d="M1550.6 79.2 L1557.6 86.5 L1564.5 79.2" stroke="#8f8f8f" stroke-width="2.4" fill="none"/></svg><svg width="1" height="1" style="left:0;top:0"><g stroke="#fff" stroke-width="2.2" fill="none"><path d="M1587.3 72.6 A22.9 22.9 0 0 1 1610.1 95.5"/><circle cx="1591" cy="91.8" r="3.2"/><line x1="1593.3" y1="89.5" x2="1600.4" y2="82.4"/><line x1="1606.5" y1="76.3" x2="1614.6" y2="68.6"/><path d="M1605.2 68.6 H1614.6 V77.5"/></g><path d="M1632.1 79.2 L1639.1 86.5 L1646 79.2" stroke="#8f8f8f" stroke-width="2.4" fill="none"/></svg><svg width="1" height="1" style="left:0;top:0"><path d="M1683 77.5 A9.3 9.3 0 1 0 1696.2 92" stroke="#fff" stroke-width="2.1" fill="none"/><circle cx="1695.1" cy="77.8" r="10" fill="#fff"/><path d="M1685.5 78.3 h3 M1689.5 81 l2.5 2.5 M1694 85.5 v3" stroke="#5680c2" stroke-width="1.6"/><path d="M1722.2 79.3 L1729.2 86.4 L1736.1 79.3" stroke="#8f8f8f" stroke-width="2.4" fill="none"/></svg><svg width="1" height="1" style="left:0;top:0"><rect x="1768.1" y="75.3" width="19.8" height="19.4" fill="#4a4a4a" stroke="#dcdcdc" stroke-width="2"/><path d="M1775.3 71.4 V68.4 H1793.9 V87.5 H1791" stroke="#c8c8c8" stroke-width="2" fill="none"/><path d="M1776 75 V78 M1776 80.5 V83.5 M1776 86 V88 H1778.5 M1781 88 H1785" stroke="#c8c8c8" stroke-width="1.8" fill="none"/></svg><svg width="1" height="1" style="left:0;top:0"><g stroke="#cfcfcf" stroke-width="2" fill="none"><circle cx="1831" cy="81.9" r="12.8"/><line x1="1818.5" y1="77.5" x2="1843.5" y2="77.5"/><line x1="1818.5" y1="87.5" x2="1843.5" y2="87.5"/><path d="M1831 69 Q1826.5 81.9 1831 94.8"/></g><circle cx="1868.9" cy="81.9" r="14" fill="#fff"/><g stroke="#cfcfcf" stroke-width="2" fill="none"><circle cx="1906.8" cy="81.9" r="12.8"/></g><path d="M1906.8 69.1 V81.9 L1900 86 Q1894.5 84 1894 81.9 A12.8 12.8 0 0 1 1906.8 69.1 Z" fill="#cfcfcf"/><path d="M1907.5 92 l2.5 2.5 M1910.5 89 l3 3 M1913.5 86 l3 3 M1916 83 l2.5 2.5" stroke="#cfcfcf" stroke-width="1.6"/><g stroke="#cfcfcf" stroke-width="2" fill="none"><circle cx="1945" cy="81.9" r="12.8"/></g><path d="M1937.5 80 Q1938.5 74 1943.5 72" stroke="#cfcfcf" stroke-width="3.2" stroke-linecap="round" fill="none"/><path d="M1942 92 l2 2 M1945.5 90.5 l2.5 2.5 M1949 88.5 l2.5 2.5 M1952 85.5 l2.5 2.5 M1954 82 l2.5 2.5" stroke="#cfcfcf" stroke-width="1.6"/><path d="M1976.1 79.4 L1983 86.3 L1989.9 79.4" stroke="#8f8f8f" stroke-width="2.4" fill="none"/></svg><svg width="1" height="1" style="left:0;top:0"><circle cx="2064.8" cy="81.9" r="13.3" stroke="#e0e0e0" stroke-width="2" fill="none"/><circle cx="2064.8" cy="74.3" r="2" fill="#e0e0e0"/><path d="M2058 80 L2059.8 76.5" stroke="#e0e0e0" stroke-width="2.2" stroke-linecap="round"/><path d="M2084.5 79.1 L2091.6 86 L2098.4 79.1" stroke="#8f8f8f" stroke-width="2.4" fill="none"/><rect x="2131.3" y="74.1" width="15.6" height="15.6" fill="#d8d8d8"/><path d="M2126 74 V69.4 H2130.5 M2147.7 69.4 H2152.2 V74 M2152.2 89.8 V94.4 H2147.7 M2130.5 94.4 H2126 V89.8" stroke="#b4b4b4" stroke-width="2" fill="none"/><path d="M2278.7 79.1 L2285.5 86 L2292.6 79.1" stroke="#8f8f8f" stroke-width="2.4" fill="none"/></svg><svg width="1" height="1" style="left:0;top:0"><g transform="translate(47.5 167.6)"><path d="M2.5 4.9 Q5 10.5 10.5 10.2 Q16 9.5 25 4.5 Q32 1.5 37.1 2.1 Q30 -1.5 22 -0.5 Q17.5 0.5 15.5 3 Q12 6.5 8 6 Q4.5 5.8 2.5 4.9 Z" fill="#999"/><path d="M14.7 -9.9 L28.5 -23.2 Q33 -27 36.7 -28.5 Q38.5 -28.5 37.9 -26.4 Q36.5 -23.5 34.2 -21.1 L18.8 -5.9 Z" fill="#e5e5e5"/><path d="M0 0 L5.5 -5.5 Q8.5 -8.3 11.6 -8.3 A5.7 5.7 0 1 1 9.5 4.2 Q4 4.3 0 0 Z" fill="#e5e5e5" stroke="#5680c2" stroke-width="1.3"/></g></svg><svg width="1" height="1" style="left:0;top:0"><g transform="translate(1611.4 200.3)"><path d="M2.5 4.9 Q5 10.5 10.5 10.2 Q16 9.5 25 4.5 Q32 1.5 37.1 2.1 Q30 -1.5 22 -0.5 Q17.5 0.5 15.5 3 Q12 6.5 8 6 Q4.5 5.8 2.5 4.9 Z" fill="#999"/><path d="M14.7 -9.9 L28.5 -23.2 Q33 -27 36.7 -28.5 Q38.5 -28.5 37.9 -26.4 Q36.5 -23.5 34.2 -21.1 L18.8 -5.9 Z" fill="#e5e5e5"/><path d="M0 0 L5.5 -5.5 Q8.5 -8.3 11.6 -8.3 A5.7 5.7 0 1 1 9.5 4.2 Q4 4.3 0 0 Z" fill="#e5e5e5" stroke="#303030" stroke-width="1.3"/></g></svg><svg width="1" height="1" style="left:0;top:0"><path d="M55.5 228 Q53.5 241 66 243 Q74 244 78.5 238.5 Q83.5 236.5 83.5 232 Q83 227.5 80 227 Q79 235.5 69 236.5 Q57.5 236.5 56.5 227 Z" fill="#9a9a9a"/><path d="M68.8 209 L76.6 218.7 A9.8 9.8 0 1 1 61.2 218.7 Z" fill="#e4e4e4" stroke="#2f2f2f" stroke-width="1.6"/></svg><svg width="1" height="1" style="left:0;top:0"><ellipse cx="66.8" cy="311.4" rx="12.6" ry="3.1" fill="#9a9a9a"/><path d="M72.6 277.1 L81 285.5 L80.1 289.2 L77.6 304.3 Q75.5 306 73.4 303.4 L73.4 296.8 L58.6 310 Q56 311.5 55.5 308.5 L63.4 299.3 Q60.5 298 61.5 295.5 L62 294.5 Q58.5 293.5 58.8 290.9 Q56.5 289.5 57.2 287.2 L64.7 280 Q68 278 71.8 277.5 Z" fill="#e4e4e4" stroke="#2f2f2f" stroke-width="0.8"/></svg><svg width="1" height="1" style="left:0;top:0"><circle cx="68.8" cy="354" r="5.9" fill="#e4e4e4"/><rect x="65.9" y="355" width="6.1" height="8" fill="#e4e4e4"/><path d="M55.9 367.8 V365.7 Q55.9 361.7 59.9 361.7 H78.2 Q82.2 361.7 82.2 365.7 V367.8 Z" fill="#e4e4e4"/><rect x="58.8" y="369.5" width="20.3" height="2.7" fill="#f0f0f0"/><path d="M54.6 374.7 H83 L85.8 380.8 H52.1 Z" fill="#9a9a9a"/></svg><svg width="1" height="1" style="left:0;top:0"><path d="M56.3 437.2 L61.5 443.5 A7 7 0 1 1 51.1 443.5 Z" fill="#9a9a9a"/><path d="M71.4 420.5 L87.2 435.1 L74.3 447.4 L57.2 433.4 Z" fill="none" stroke="#ececec" stroke-width="2.2" stroke-linejoin="round"/><path d="M65.1 434.7 H83 L74.3 444.3 Z" fill="#e4e4e4"/><path d="M70.5 429.2 V419 A3.3 3.3 0 0 1 76.8 418.5 V424" fill="none" stroke="#ececec" stroke-width="2"/></svg><svg width="1" height="1" style="left:0;top:0"><path d="M54.9 499.7 H64.4 V512.6 H77 V521.8 H54.9 Z" fill="#9a9a9a"/><rect x="67.5" y="491.7" width="17.3" height="17" fill="#2f2f2f" stroke="#ececec" stroke-width="2.4"/><path d="M69.9 506.1 V495.7 A10.5 10.5 0 0 1 81 506.1 Z" fill="#e4e4e4"/></svg><svg width="1" height="1" style="left:0;top:0"><path d="M45.1 600.5 Q44 598 46 595 L48.6 591.9 L53.8 597.1 L50 599.5 Q47 601.5 45.1 600.5 Z" fill="#e4e4e4"/><path d="M50.1 590.8 L69.2 572.1 L73.8 577 L55.6 595.8 Z" fill="#e4e4e4"/><path d="M69.8 571.5 L74 566.9 L79 571.9 L74.4 576.5 Z" fill="#e4e4e4"/><path d="M47.3 602.4 Q53 607.5 60 605.5 Q64 604.5 68 601.5 Q75 594.5 80.6 593.4 Q86.5 593 89.3 595.8 Q92.5 598.5 94.1 602.4" stroke="#7ddcaa" stroke-width="2.5" fill="none" stroke-linecap="round"/><path d="M99.8 616.8 H107.9 V608.9 Z" fill="#8a8a8a"/></svg><svg width="1" height="1" style="left:0;top:0"><g stroke="#c8c8c8" stroke-width="2" fill="none"><rect x="1184" y="138" width="30.1" height="30"/><line x1="1194" y1="138" x2="1194" y2="168"/><line x1="1204" y1="138" x2="1204" y2="168"/><line x1="1184" y1="147.5" x2="1214" y2="147.5"/><line x1="1184" y1="157.5" x2="1214" y2="157.5"/></g></svg><svg width="1" height="1" style="left:0;top:0"><path d="M1244.5 150 A6.7 6.7 0 0 1 1254.5 141.7 A9 9 0 1 1 1266 154.6 H1250.5 A6.7 6.7 0 0 1 1244.5 150 Z" fill="#c8c8c8"/><circle cx="1250.7" cy="147.5" r="2.4" fill="none" stroke="#2c2c2c" stroke-width="1.5"/><circle cx="1264.7" cy="145.7" r="2.4" fill="none" stroke="#2c2c2c" stroke-width="1.5"/><rect x="1251.9" y="157" width="14.1" height="11.9" rx="1.5" fill="#c8c8c8"/><path d="M1248 158.8 V164.6 M1248 161.7 H1252" stroke="#c8c8c8" stroke-width="1.6"/><path d="M1267.5 163.7 L1275.7 158.5 V168.9 Z" fill="#c8c8c8"/></svg><svg width="1" height="1" style="left:0;top:0"><path d="M1306 152.5 Q1304 155 1307 158 L1316 166 Q1322 171 1328 166 Q1331 162 1333 155 L1337 148.5 Q1337 146 1335 146.5 L1331 153 L1332.5 141 Q1332 138.5 1330 139 Q1328.5 139.5 1328.5 141 L1326 152 L1324 139 Q1323.5 137 1322 137 Q1320.5 137 1320.5 139 L1319.5 152 L1316.5 140 Q1315.5 138.5 1314 139 Q1312.5 139.5 1313 141 L1314.5 158 L1313.5 158 L1308 153 Q1306.5 152 1306 152.5 Z" fill="#c8c8c8"/></svg><svg width="1" height="1" style="left:0;top:0"><line x1="1367" y1="166.8" x2="1375.6" y2="158.8" stroke="#c8c8c8" stroke-width="3.4" stroke-linecap="round"/><circle cx="1384.1" cy="149.7" r="12.8" fill="#c8c8c8"/><path d="M1377.4 149.7 H1390.9 M1384.1 143 V156.4" stroke="#2c2c2c" stroke-width="2"/></svg><svg width="1" height="1" style="left:0;top:0"><rect x="1943.80" y="481" width="2.1" height="1.9" fill="#bcbcbc"/><rect x="1943.80" y="482.9" width="2.1" height="2.1" fill="#000"/><rect x="1943.80" y="487" width="2.1" height="1.9" fill="#bcbcbc"/><rect x="1943.80" y="488.9" width="2.1" height="2.1" fill="#000"/><rect x="1949.75" y="481" width="2.1" height="1.9" fill="#bcbcbc"/><rect x="1949.75" y="482.9" width="2.1" height="2.1" fill="#000"/><rect x="1949.75" y="487" width="2.1" height="1.9" fill="#bcbcbc"/><rect x="1949.75" y="488.9" width="2.1" height="2.1" fill="#000"/><rect x="1955.70" y="481" width="2.1" height="1.9" fill="#bcbcbc"/><rect x="1955.70" y="482.9" width="2.1" height="2.1" fill="#000"/><rect x="1955.70" y="487" width="2.1" height="1.9" fill="#bcbcbc"/><rect x="1955.70" y="488.9" width="2.1" height="2.1" fill="#000"/><rect x="1961.65" y="481" width="2.1" height="1.9" fill="#bcbcbc"/><rect x="1961.65" y="482.9" width="2.1" height="2.1" fill="#000"/><rect x="1961.65" y="487" width="2.1" height="1.9" fill="#bcbcbc"/><rect x="1961.65" y="488.9" width="2.1" height="2.1" fill="#000"/></svg><svg width="1" height="1" style="left:0;top:0"><rect x="1943.80" y="529" width="2.1" height="1.9" fill="#bcbcbc"/><rect x="1943.80" y="530.9" width="2.1" height="2.1" fill="#000"/><rect x="1943.80" y="535" width="2.1" height="1.9" fill="#bcbcbc"/><rect x="1943.80" y="536.9" width="2.1" height="2.1" fill="#000"/><rect x="1949.75" y="529" width="2.1" height="1.9" fill="#bcbcbc"/><rect x="1949.75" y="530.9" width="2.1" height="2.1" fill="#000"/><rect x="1949.75" y="535" width="2.1" height="1.9" fill="#bcbcbc"/><rect x="1949.75" y="536.9" width="2.1" height="2.1" fill="#000"/><rect x="1955.70" y="529" width="2.1" height="1.9" fill="#bcbcbc"/><rect x="1955.70" y="530.9" width="2.1" height="2.1" fill="#000"/><rect x="1955.70" y="535" width="2.1" height="1.9" fill="#bcbcbc"/><rect x="1955.70" y="536.9" width="2.1" height="2.1" fill="#000"/><rect x="1961.65" y="529" width="2.1" height="1.9" fill="#bcbcbc"/><rect x="1961.65" y="530.9" width="2.1" height="2.1" fill="#000"/><rect x="1961.65" y="535" width="2.1" height="1.9" fill="#bcbcbc"/><rect x="1961.65" y="536.9" width="2.1" height="2.1" fill="#000"/></svg><svg width="1" height="1" style="left:0;top:0"><rect x="1943.80" y="577" width="2.1" height="1.9" fill="#bcbcbc"/><rect x="1943.80" y="578.9" width="2.1" height="2.1" fill="#000"/><rect x="1943.80" y="583" width="2.1" height="1.9" fill="#bcbcbc"/><rect x="1943.80" y="584.9" width="2.1" height="2.1" fill="#000"/><rect x="1949.75" y="577" width="2.1" height="1.9" fill="#bcbcbc"/><rect x="1949.75" y="578.9" width="2.1" height="2.1" fill="#000"/><rect x="1949.75" y="583" width="2.1" height="1.9" fill="#bcbcbc"/><rect x="1949.75" y="584.9" width="2.1" height="2.1" fill="#000"/><rect x="1955.70" y="577" width="2.1" height="1.9" fill="#bcbcbc"/><rect x="1955.70" y="578.9" width="2.1" height="2.1" fill="#000"/><rect x="1955.70" y="583" width="2.1" height="1.9" fill="#bcbcbc"/><rect x="1955.70" y="584.9" width="2.1" height="2.1" fill="#000"/><rect x="1961.65" y="577" width="2.1" height="1.9" fill="#bcbcbc"/><rect x="1961.65" y="578.9" width="2.1" height="2.1" fill="#000"/><rect x="1961.65" y="583" width="2.1" height="1.9" fill="#bcbcbc"/><rect x="1961.65" y="584.9" width="2.1" height="2.1" fill="#000"/></svg><svg width="1" height="1" style="left:0;top:0"><rect x="1943.80" y="625" width="2.1" height="1.9" fill="#bcbcbc"/><rect x="1943.80" y="626.9" width="2.1" height="2.1" fill="#000"/><rect x="1943.80" y="631" width="2.1" height="1.9" fill="#bcbcbc"/><rect x="1943.80" y="632.9" width="2.1" height="2.1" fill="#000"/><rect x="1949.75" y="625" width="2.1" height="1.9" fill="#bcbcbc"/><rect x="1949.75" y="626.9" width="2.1" height="2.1" fill="#000"/><rect x="1949.75" y="631" width="2.1" height="1.9" fill="#bcbcbc"/><rect x="1949.75" y="632.9" width="2.1" height="2.1" fill="#000"/><rect x="1955.70" y="625" width="2.1" height="1.9" fill="#bcbcbc"/><rect x="1955.70" y="626.9" width="2.1" height="2.1" fill="#000"/><rect x="1955.70" y="631" width="2.1" height="1.9" fill="#bcbcbc"/><rect x="1955.70" y="632.9" width="2.1" height="2.1" fill="#000"/><rect x="1961.65" y="625" width="2.1" height="1.9" fill="#bcbcbc"/><rect x="1961.65" y="626.9" width="2.1" height="2.1" fill="#000"/><rect x="1961.65" y="631" width="2.1" height="1.9" fill="#bcbcbc"/><rect x="1961.65" y="632.9" width="2.1" height="2.1" fill="#000"/></svg><div class="a" style="left:1925.50px;top:423.40px;width:358.60px;height:323.00px;background:rgba(31,31,31,.94);border-radius:0 0 6px 6px;box-shadow:0 3px 8px rgba(0,0,0,.35);"></div><div class="a" style="left:1926.90px;top:653.30px;width:356.10px;height:35.70px;background:#4772b3;"></div><div class="t" style="left:1985.00px;top:439.03px;font-size:23px;line-height:23px;color:#e6e6e6;transform:scaleX(1.03);text-shadow:0 1px 2px rgba(0,0,0,.55);">Base Color</div><div class="a" style="left:1987.00px;top:463.10px;width:11.50px;height:1.40px;background:#e6e6e6;"></div><div class="t" style="left:1985.00px;top:482.93px;font-size:23px;line-height:23px;color:#e6e6e6;transform:scaleX(1.03);text-shadow:0 1px 2px rgba(0,0,0,.55);">Specular</div><div class="a" style="left:1987.00px;top:507.00px;width:11.50px;height:1.40px;background:#e6e6e6;"></div><div class="t" style="left:1985.00px;top:526.83px;font-size:23px;line-height:23px;color:#e6e6e6;transform:scaleX(1.03);text-shadow:0 1px 2px rgba(0,0,0,.55);">Roughness</div><div class="a" style="left:1987.00px;top:550.90px;width:11.50px;height:1.40px;background:#e6e6e6;"></div><div class="t" style="left:1985.00px;top:570.73px;font-size:23px;line-height:23px;color:#e6e6e6;transform:scaleX(1.03);text-shadow:0 1px 2px rgba(0,0,0,.55);">Metallic</div><div class="a" style="left:1987.00px;top:594.80px;width:11.50px;height:1.40px;background:#e6e6e6;"></div><div class="t" style="left:1985.00px;top:614.63px;font-size:23px;line-height:23px;color:#e6e6e6;transform:scaleX(1.03);text-shadow:0 1px 2px rgba(0,0,0,.55);">Normal</div><div class="a" style="left:1987.00px;top:638.70px;width:11.50px;height:1.40px;background:#e6e6e6;"></div><div class="t" style="left:1985.00px;top:658.53px;font-size:23px;line-height:23px;color:#e6e6e6;transform:scaleX(1.03);text-shadow:0 1px 2px rgba(0,0,0,.55);">Bump</div><div class="a" style="left:2002.00px;top:682.60px;width:11.00px;height:1.40px;background:#e6e6e6;"></div><div class="t" style="left:1985.00px;top:702.43px;font-size:23px;line-height:23px;color:#e6e6e6;transform:scaleX(1.03);text-shadow:0 1px 2px rgba(0,0,0,.55);">Displacement</div><div class="a" style="left:1987.00px;top:726.50px;width:11.50px;height:1.40px;background:#e6e6e6;"></div></body></html>
